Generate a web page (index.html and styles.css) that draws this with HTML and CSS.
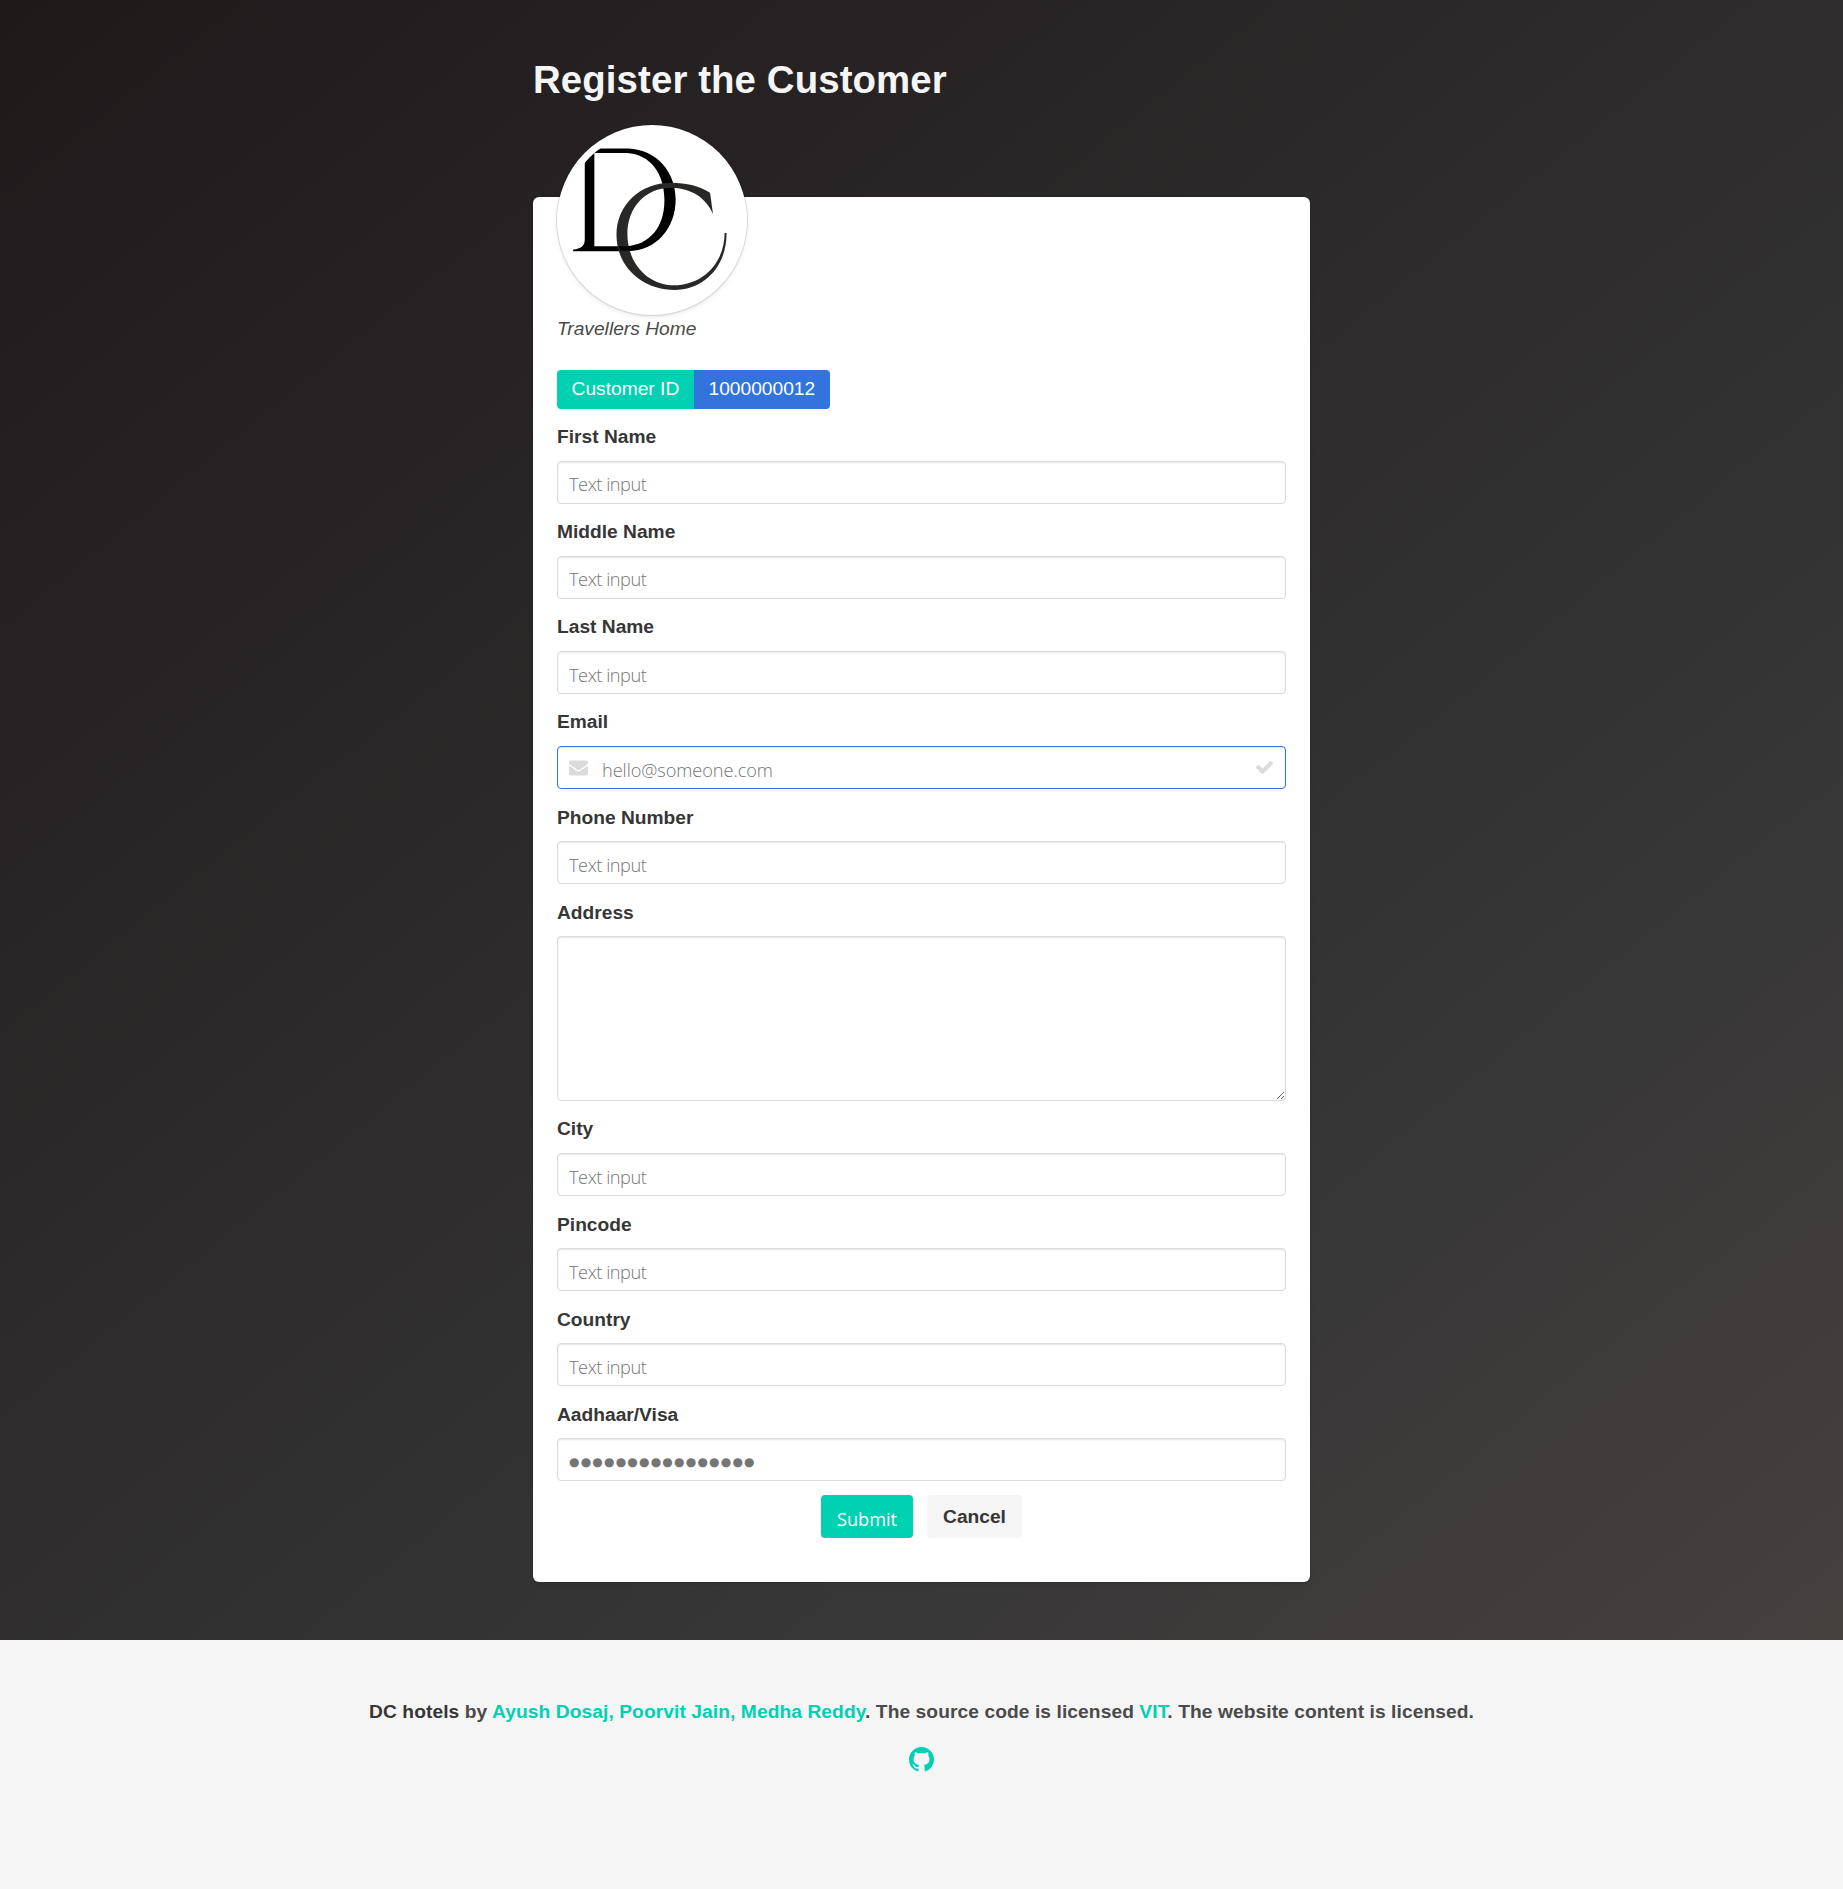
FILE: index.html
```html
<!DOCTYPE html>
<html lang="en">
<head>
<meta charset="utf-8">
<title>Register the Customer</title>
<link rel="stylesheet" href="styles.css">
</head>
<body>
<section class="hero">
  <div class="column">
    <h1 class="title">Register the Customer</h1>
    <form class="box">
      <div class="avatar">
        <svg viewBox="49 44 576 576" role="img" aria-label="DC">
          <defs><clipPath id="disc"><circle cx="337" cy="332" r="268"/></clipPath></defs>
          <g clip-path="url(#disc)">
            <path fill="#000" fill-rule="evenodd" d="M100 115H265C350 119 408 185 408 269C408 358 348 425 265 426H98V421C121 419 133 411 133 390V129H100ZM162 129V411H260C329 406 374 354 374 272C374 190 331 133 260 129Z"/>
            <path fill="#292827" d="M521 313C499 264 455 235 394 234C316 234 262 294 262 374C262 462 323 529 403 529C488 529 556 463 556 371H562C563 470 495 543 405 543C306 543 229 472 229 377C229 286 301 219 394 219C441 219 482 230 512 249Z"/>
            <path fill="#000" d="M236 411H270V424H240Z"/>
          </g>
        </svg>
      </div>
      <p class="caption">Travellers Home</p>
      <div class="tags"><span class="tag tag-primary">Customer ID</span><span class="tag tag-link">1000000012</span></div>

      <div class="field"><label class="label">First Name</label><input class="input" type="text" placeholder="Text input"></div>
      <div class="field"><label class="label">Middle Name</label><input class="input" type="text" placeholder="Text input"></div>
      <div class="field"><label class="label">Last Name</label><input class="input" type="text" placeholder="Text input"></div>
      <div class="field">
        <label class="label">Email</label>
        <div class="input input-icons">
          <svg class="icon-mail" viewBox="0 0 1792 1408"><path d="M1792 454v794q0 66-47 113t-113 47H160q-66 0-113-47T0 1248V454q44 49 101 87 362 246 497 345 57 42 92.500 65.500t94.500 48 110 24.500h2q51 0 110-24.500t94.500-48T1194 886q170-123 498-345 57-39 100-87zm0-294q0 79-49 151t-122 123q-376 261-468 325-10 7-42.500 30.500t-54 38-52 32.500-57.500 27-50 9h-2q-23 0-50-9t-57.500-27-52-32.500-54-38T639 759q-91-64-262-182.500T172 434q-62-42-117-115.500T0 182q0-78 41.500-130T160 0h1472q65 0 112.500 47t47.500 113z"/></svg>
          <input class="bare" type="email" placeholder="hello@someone.com">
          <svg class="icon-check" viewBox="0 0 1550 1188"><path d="M1550 232q0 40-28 68L798 1024l-136 136q-28 28-68 28t-68-28L390 1024 28 662Q0 634 0 594t28-68l136-136q28-28 68-28t68 28l294 295 656-657q28-28 68-28t68 28l136 136q28 28 28 68z"/></svg>
        </div>
      </div>
      <div class="field"><label class="label">Phone Number</label><input class="input" type="text" placeholder="Text input"></div>
      <div class="field"><label class="label">Address</label><textarea class="input textarea"></textarea></div>
      <div class="field"><label class="label">City</label><input class="input" type="text" placeholder="Text input"></div>
      <div class="field"><label class="label">Pincode</label><input class="input" type="text" placeholder="Text input"></div>
      <div class="field"><label class="label">Country</label><input class="input" type="text" placeholder="Text input"></div>
      <div class="field"><label class="label">Aadhaar/Visa</label><input class="input secret" type="text" placeholder="●●●●●●●●●●●●●●●●"></div>
      <div class="buttons">
        <button class="button button-primary" type="button">Submit</button>
        <a class="button button-plain">Cancel</a>
      </div>
    </form>
  </div>
</section>
<footer class="footer">
  <p><strong>DC hotels</strong> by <a>Ayush Dosaj, Poorvit Jain, Medha Reddy</a>. The source code is licensed <a>VIT</a>. The website content is licensed.</p>
  <svg class="github" viewBox="0 0 16 16"><path d="M8 0C3.580 0 0 3.580 0 8c0 3.540 2.290 6.530 5.470 7.590.4.070.55-.17.55-.38 0-.19-.01-.82-.01-1.490-2.010.37-2.530-.49-2.690-.94-.09-.23-.48-.94-.82-1.130-.28-.15-.68-.52-.01-.53.63-.01 1.080.58 1.230.82.72 1.210 1.870.87 2.330.66.07-.52.28-.87.51-1.070-1.780-.2-3.640-.89-3.640-3.950 0-.87.31-1.590.82-2.150-.08-.2-.36-1.020.08-2.120 0 0 .67-.21 2.200.82.64-.18 1.320-.27 2-.27s1.360.09 2 .27c1.530-1.040 2.200-.82 2.200-.82.44 1.100.16 1.920.08 2.120.51.56.82 1.270.82 2.150 0 3.070-1.870 3.750-3.650 3.950.29.25.54.73.54 1.480 0 1.070-.01 1.930-.01 2.200 0 .21.15.46.55.38A8.010 8.010 0 0 0 16 8c0-4.420-3.580-8-8-8z"/></svg>
</footer>
</body>
</html>
```
FILE: styles.css
```css
*, *::before, *::after { box-sizing: border-box; }
html { font-size: 19.2px; background: #f5f5f5; }
body {
  margin: 0;
  font-family: "Liberation Sans", Arial, sans-serif;
  font-size: 1rem;
  line-height: 1.5;
  color: #4a4a4a;
}
.hero {
  height: 1640px;
  padding-top: 57.6px;
  background: linear-gradient(141deg, #1f191a 0%, #363636 71%, #46403f 100%);
}
.column { width: 777px; margin: 0 auto; }
.title { margin: 0; font-size: 2rem; line-height: 1.125; font-weight: 700; color: #f5f5f5; letter-spacing: .1px; }
.box {
  margin-top: 96px;
  height: 1385.4px;
  padding: 24px;
  background: #fff;
  border-radius: 6px;
  box-shadow: 0 2px 4px rgba(10, 10, 10, .1), 0 0 0 1px rgba(10, 10, 10, .1);
}
.avatar {
  width: 190.4px;
  height: 190.4px;
  margin-top: -96px;
  border-radius: 50%;
  background: #fff;
  box-shadow: 0 2px 4px rgba(10, 10, 10, .1), 0 0 0 1px rgba(10, 10, 10, .1);
}
.avatar svg { display: block; width: 100%; height: 100%; }
.caption { margin: -.4px 0 0; font-style: italic; height: 28.8px; }
.tags { display: flex; margin-top: 26px; }
.tag { height: 39px; padding: 1px 14.6px 0; display: flex; align-items: center; color: #fff; }
.tag-primary { background: #00d1b2; border-radius: 4px 0 0 4px; }
.tag-link { background: #3273dc; border-radius: 0 4px 4px 0; }
.field { display: flex; flex-direction: column; padding-top: 14.3px; }
.label { height: 37.6px; font-weight: 700; color: #363636; }
.tags + .field { padding-top: 14.6px; }
.input {
  width: 100%;
  height: 43.2px;
  padding: 5px 11px 1px;
  border: 1px solid #dbdbdb;
  border-radius: 4px;
  background: #fff;
  box-shadow: inset 0 1px 2px rgba(10, 10, 10, .1);
  font: 300 18.2px/28px "Open Sans", sans-serif;
  letter-spacing: -.45px;
  color: #363636;
  outline: none;
}
.input::placeholder, .bare::placeholder { color: #757575; opacity: 1; }
.textarea { display: block; height: 165px; resize: vertical; }
.input-icons { display: flex; align-items: center; border-color: #3273dc; padding: 0 12px 0 11px; }
.bare { flex: 1; margin-left: 14px; padding: 4px 0 0; border: 0; background: none; outline: none; font: inherit; letter-spacing: -.07px; }
.icon-mail { width: 19px; height: 16px; fill: #dbdbdb; }
.icon-check { width: 17px; height: 13px; fill: #dbdbdb; }
.secret { font: 12px/28px "DejaVu Sans", sans-serif; letter-spacing: 1.2px; padding-top: 6px; }
.buttons { display: flex; justify-content: center; gap: 14px; margin-top: 14px; }
.button {
  height: 43px;
  border: 0;
  border-radius: 4px;
  display: flex;
  align-items: center;
  justify-content: center;
  font-size: 19.2px;
}
.button-primary { width: 92px; padding: 4px 0 0; background: #00d1b2; color: #fff; font-family: "Open Sans", sans-serif; font-size: 18.2px; font-weight: 400; }
.button-plain { width: 95px; padding-top: 1px; background: #f5f5f5; color: #363636; font-weight: 700; }
.footer {
  height: 249px;
  padding-top: 57.6px;
  background: #f5f5f5;
  text-align: center;
  font-weight: 700;
}
.footer p { margin: 0; letter-spacing: .08px; }
.footer strong { color: #363636; }
.footer a { color: #00d1b2; }
.github { display: block; width: 25px; height: 25px; margin: 20.4px auto 0; fill: #00d1b2; }
```
